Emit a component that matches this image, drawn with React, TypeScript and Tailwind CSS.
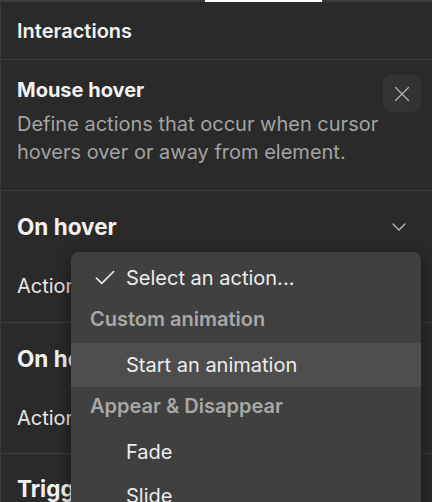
import { Check, ChevronDown, X } from 'lucide-react';

function HoverSection({ title, tall }: { title: string; tall?: boolean }) {
  return (
    <section className={`${tall ? 'h-[132px]' : 'h-[131px]'} border-b border-[#3d3d3d] px-4 pt-[21px]`}>
      <div className="flex items-center justify-between">
        <h2 className="text-[22.5px] font-bold leading-[30px] text-[#f2f2f2]">{title}</h2>
        <ChevronDown className="mr-[5px] h-6 w-6 text-[#bdbdbd]" strokeWidth={1.25} />
      </div>
      <div className="mt-[26px] flex items-center justify-between">
        <span className="text-[20px] leading-[28px] text-[#e6e6e6]">Action</span>
        <div className="h-[36px] w-[300px] rounded-md bg-[#333333]" />
      </div>
    </section>
  );
}

const menu = [
  { kind: 'item', label: 'Select an action...', checked: true },
  { kind: 'header', label: 'Custom animation' },
  { kind: 'item', label: 'Start an animation', active: true },
  { kind: 'header', label: 'Appear & Disappear' },
  { kind: 'item', label: 'Fade' },
  { kind: 'item', label: 'Slide' },
];

export default function App() {
  return (
    <div
      className="relative h-[502px] w-[432px] overflow-hidden border-l border-[#3a3a3a] bg-[#2a2a2a]"
      style={{ fontFamily: 'Inter, "Noto Sans", sans-serif' }}
    >
      <div className="h-[2px] bg-[#3b3b3b]">
        <div className="ml-[204px] h-[2px] w-[117px] bg-white" />
      </div>

      <div className="flex h-[58px] items-center border-b border-[#3d3d3d] px-4">
        <h1 className="text-[20px] font-semibold text-[#f2f2f2]">Interactions</h1>
      </div>

      <section className="h-[131px] border-b border-[#3d3d3d] pl-4 pr-[11px] pt-[15px]">
        <div className="flex items-start justify-between">
          <h2 className="mt-[2px] text-[20px] font-bold leading-[26px] text-[#f2f2f2]">Mouse hover</h2>
          <button className="flex h-[37px] w-[38px] items-center justify-center rounded-lg bg-[#333333]">
            <X className="h-[26px] w-[26px] text-[#b5b5b5]" strokeWidth={1.1} />
          </button>
        </div>
        <p className="-mt-[2px] text-[20px] leading-[28px] text-[#a3a3a3]">
          Define actions that occur when cursor hovers over or away from element.
        </p>
      </section>

      <HoverSection title="On hover" tall />
      <HoverSection title="On hover out" />

      <section className="px-4 pt-[20px]">
        <h2 className="text-[22.5px] font-bold leading-[30px] text-[#f2f2f2]">Trigger</h2>
      </section>

      <div className="absolute left-[70px] top-[252px] w-[350px] rounded-lg bg-[#404040] pt-1 shadow-[0_4px_16px_rgba(0,0,0,0.45)]">
        {menu.map((m) =>
          m.kind === 'header' ? (
            <div
              key={m.label}
              className="flex h-[43px] items-center pb-[6px] pl-[19px] text-[20px] font-semibold text-[#a8a8a8]"
            >
              {m.label}
            </div>
          ) : (
            <div
              key={m.label}
              className={`flex h-[44px] items-center pl-[25px] text-[20px] text-[#ededed] ${
                m.active ? 'bg-[#4e4e4e]' : ''
              }`}
            >
              <span className="flex w-[30px] items-center">
                {m.checked && (
                  <Check className="-ml-[4px] h-[26px] w-[26px] shrink-0 text-[#ededed]" strokeWidth={1.5} />
                )}
              </span>
              {m.label}
            </div>
          ),
        )}
      </div>
    </div>
  );
}
